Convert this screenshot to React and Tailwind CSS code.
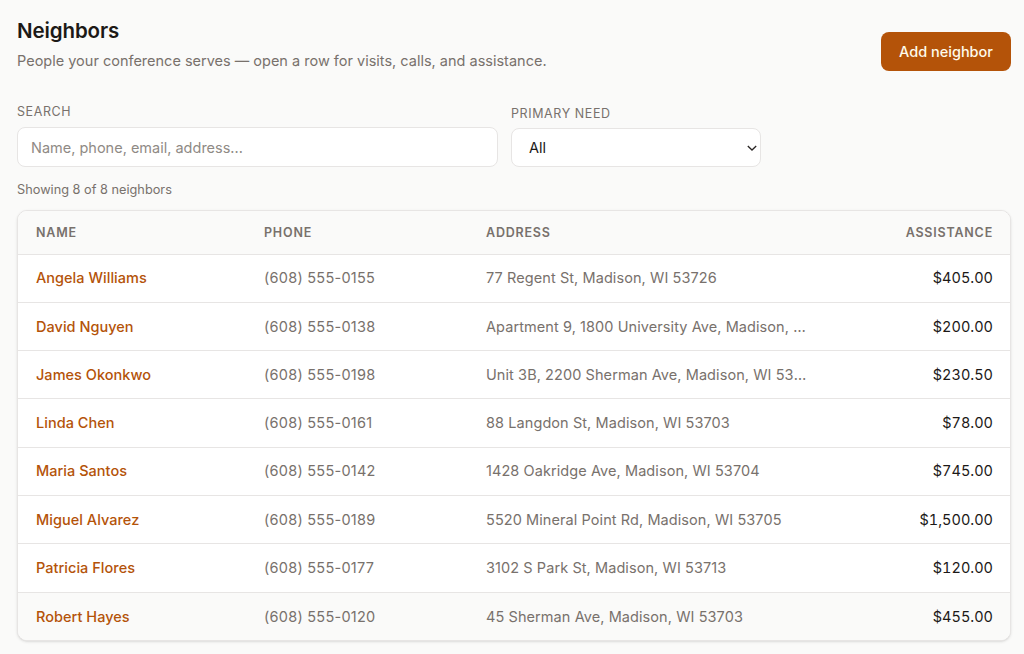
const neighbors = [
  { name: "Angela Williams", phone: "(608) 555-0155", address: "77 Regent St, Madison, WI 53726", amount: "$405.00" },
  { name: "David Nguyen", phone: "(608) 555-0138", address: "Apartment 9, 1800 University Ave, Madison, WI 53726", amount: "$200.00" },
  { name: "James Okonkwo", phone: "(608) 555-0198", address: "Unit 3B, 2200 Sherman Ave, Madison, WI 53704", amount: "$230.50" },
  { name: "Linda Chen", phone: "(608) 555-0161", address: "88 Langdon St, Madison, WI 53703", amount: "$78.00" },
  { name: "Maria Santos", phone: "(608) 555-0142", address: "1428 Oakridge Ave, Madison, WI 53704", amount: "$745.00" },
  { name: "Miguel Alvarez", phone: "(608) 555-0189", address: "5520 Mineral Point Rd, Madison, WI 53705", amount: "$1,500.00" },
  { name: "Patricia Flores", phone: "(608) 555-0177", address: "3102 S Park St, Madison, WI 53713", amount: "$120.00" },
  { name: "Robert Hayes", phone: "(608) 555-0120", address: "45 Sherman Ave, Madison, WI 53703", amount: "$455.00" },
];

export default function App() {
  return (
    <div className="min-h-[654px] bg-[#fafaf9] pl-[17px] pr-[13px] pt-[18px] font-['Inter',sans-serif] text-[#1c1917]">
      {/* Header */}
      <div className="flex items-start justify-between">
        <div>
          <h1 className="text-[20.5px] leading-[26px] font-semibold tracking-[-0.1px] text-[#1c1917]">Neighbors</h1>
          <p className="mt-[7px] text-[14.5px] leading-[20px] text-[#78716c]">
            People your conference serves — open a row for visits, calls, and assistance.
          </p>
        </div>
        <button className="mt-[14px] h-[39px] w-[130px] rounded-lg bg-[#b45309] text-[14.5px] font-medium text-[#fffbeb]">
          Add neighbor
        </button>
      </div>

      {/* Filters */}
      <div className="mt-[33px] flex items-end gap-[13px]">
        <div className="w-[481px]">
          <label className="block text-[12.5px] leading-[16px] tracking-[0.6px] text-[#78716c]">SEARCH</label>
          <input
            className="mt-[7px] block h-[40px] w-full rounded-lg border border-[#e7e5e4] bg-white px-[13px] text-[14.5px] outline-none placeholder:text-[#8f8a85]"
            placeholder="Name, phone, email, address..."
          />
        </div>
        <div className="w-[250px]">
          <label className="block text-[12.5px] leading-[16px] tracking-[0.6px] text-[#78716c]">PRIMARY NEED</label>
          <div className="relative mt-[6px] flex h-[39px] items-center rounded-lg border border-[#e7e5e4] bg-white pl-[17px] text-[14.5px] text-[#1c1917]">
            All
            <svg className="absolute right-[3px] top-[14px] h-[10px] w-[10px]" viewBox="0 0 10 10" fill="none" stroke="#292524" strokeWidth="1.3">
              <path d="M0.8 3 5 7l4.2-4" />
            </svg>
          </div>
        </div>
      </div>

      <p className="mt-[15px] text-[12.75px] leading-[16px] text-[#78716c]">Showing 8 of 8 neighbors</p>

      {/* Table */}
      <div className="mt-[12px] overflow-hidden rounded-[10px] border border-[#e7e5e4] bg-white shadow-sm">
        <table className="w-full table-fixed border-collapse text-[14.5px]">
          <thead>
            <tr className="h-[43px] border-b border-[#e7e5e4] bg-[#fafaf9] text-[12.5px] tracking-[0.8px] text-[#78716c]">
              <th className="w-[228px] pl-[18px] pt-[2px] text-left font-semibold">NAME</th>
              <th className="w-[222px] pl-[18px] pt-[2px] text-left font-semibold">PHONE</th>
              <th className="w-[355px] pl-[18px] pt-[2px] text-left font-semibold">ADDRESS</th>
              <th className="pr-[17px] pt-[2px] text-right font-semibold">ASSISTANCE</th>
            </tr>
          </thead>
          <tbody>
            {neighbors.map((n, i) => (
              <tr key={n.name} className={`h-[48.3px] ${i < 7 ? "border-b border-[#e7e5e4]" : "bg-[#fafaf9]"}`}>
                <td className="pl-[18px] font-[450] tracking-[0.03px] text-[#b45309]">{n.name}</td>
                <td className="pl-[18px] tracking-[0.25px] text-[#78716c]">{n.phone}</td>
                <td className="truncate pl-[18px] pr-[16px] tracking-[0.08px] text-[#78716c]">{n.address}</td>
                <td className="pr-[17px] text-right tabular-nums text-[#1c1917]">{n.amount}</td>
              </tr>
            ))}
          </tbody>
        </table>
      </div>
    </div>
  );
}
